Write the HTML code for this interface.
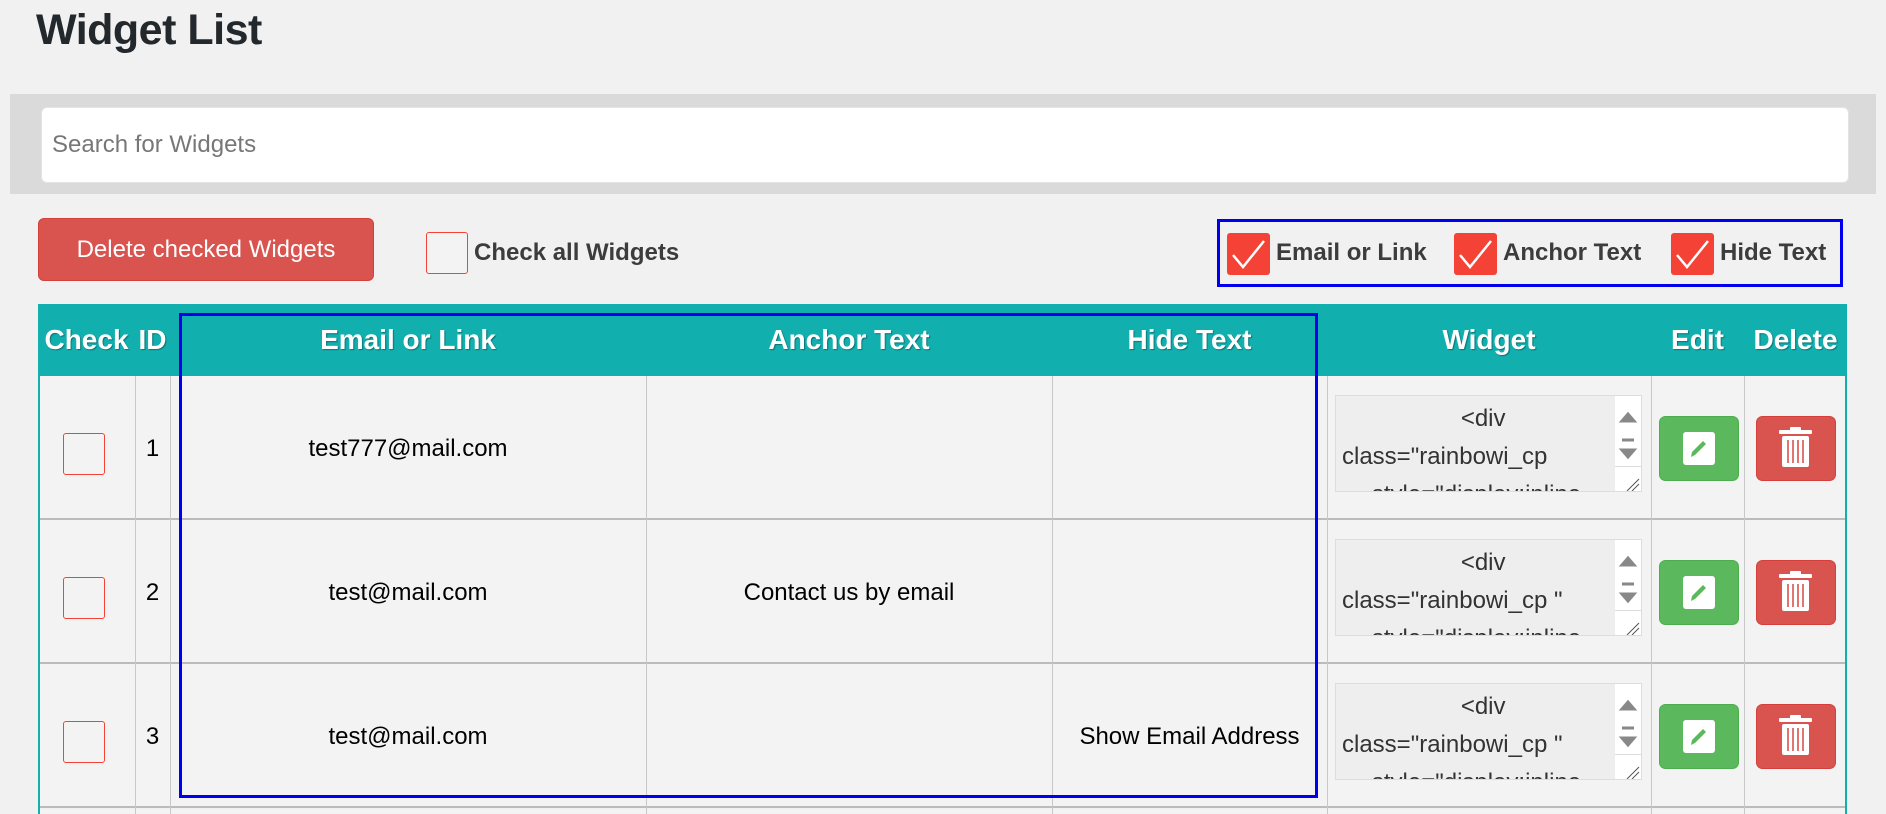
<!DOCTYPE html>
<html style="overflow:hidden;height:814px"><head><meta charset="utf-8"><style>
*{box-sizing:border-box;margin:0;padding:0}
body{width:1886px;height:814px;overflow:hidden;background:#f1f1f1;font-family:"Liberation Sans",sans-serif;position:relative;color:#000}
.a{position:absolute}
h1{position:absolute;left:36px;top:6px;font-size:43px;font-weight:bold;color:#23282d;letter-spacing:-0.5px}
.panel{left:10px;top:94px;width:1866px;height:100px;background:#dadada}
.inp{left:41px;top:107px;width:1808px;height:76px;background:#fff;border-radius:6px;border:1px solid #e4e4e4;font-size:24px;color:#777;padding:22px 10px;line-height:30px}
.btn{left:38px;top:218px;width:336px;height:63px;background:#d9534f;border:1px solid #d43f3a;border-radius:6px;color:#fff;font-size:24px;text-align:center;line-height:61px}
.cb{width:42px;height:42px;border:1px solid #f44336;border-radius:3px;background:#f3f3f3}
.lbl{font-size:24px;color:#3c3c3c;font-weight:bold;line-height:42px}
.blue{border:3px solid #0000ee}
.thead{left:38px;top:304px;width:1809px;height:72px;background:#12afaf}
.th{top:304px;height:72px;line-height:72px;color:#fff;font-size:28px;font-weight:bold;text-align:center;text-shadow:1px 1px 1px rgba(0,0,0,.35)}
.row{left:38px;width:1809px;height:144px;background:#f3f3f3;border-bottom:2px solid #bbb}
.vl{width:1px;background:#c8c8c8}
.td{font-size:24px;text-align:center;height:144px;line-height:146px}
.ta{width:307px;height:97px;background:#eee;border:1px solid #ddd;overflow:hidden;font-size:24px;color:#333;line-height:38px}
.ta .sb{position:absolute;right:0;top:0;width:26px;height:100%;background:#fff}
</style></head><body>
<h1>Widget List</h1>
<div class="a panel"></div>
<div class="a inp">Search for Widgets</div>
<div class="a btn">Delete checked Widgets</div>
<div class="a cb" style="left:426px;top:232px"></div>
<div class="a lbl" style="left:474px;top:232px">Check all Widgets</div>

<div class="a blue" style="left:1217px;top:219px;width:626px;height:68px"></div>
<svg class="a" style="left:1227px;top:233px" width="43" height="42"><rect width="43" height="42" rx="3" fill="#f44336"/><path d="M6 22 L16 34 L37 8" stroke="#fff" stroke-width="2.5" fill="none"/></svg>
<div class="a lbl" style="left:1276px;top:232px">Email or Link</div>
<svg class="a" style="left:1454px;top:233px" width="43" height="42"><rect width="43" height="42" rx="3" fill="#f44336"/><path d="M6 22 L16 34 L37 8" stroke="#fff" stroke-width="2.5" fill="none"/></svg>
<div class="a lbl" style="left:1503px;top:232px">Anchor Text</div>
<svg class="a" style="left:1671px;top:233px" width="43" height="42"><rect width="43" height="42" rx="3" fill="#f44336"/><path d="M6 22 L16 34 L37 8" stroke="#fff" stroke-width="2.5" fill="none"/></svg>
<div class="a lbl" style="left:1720px;top:232px">Hide Text</div>

<div class="a thead"></div>
<div class="a th" style="left:38px;width:97px">Check</div>
<div class="a th" style="left:135px;width:35px">ID</div>
<div class="a th" style="left:170px;width:476px">Email or Link</div>
<div class="a th" style="left:646px;width:406px">Anchor Text</div>
<div class="a th" style="left:1052px;width:275px">Hide Text</div>
<div class="a th" style="left:1327px;width:324px">Widget</div>
<div class="a th" style="left:1651px;width:93px">Edit</div>
<div class="a th" style="left:1744px;width:103px">Delete</div>

<div class="a row" style="top:376px"></div>
<div class="a row" style="top:520px"></div>
<div class="a row" style="top:664px"></div>
<div class="a" style="left:38px;top:809px;width:1809px;height:5px;background:#f3f3f3"></div>
<div class="a" style="left:38px;top:376px;width:2px;height:438px;background:#12afaf"></div>
<div class="a" style="left:1845px;top:376px;width:2px;height:438px;background:#12afaf"></div>
<div class="a vl" style="left:135px;top:376px;height:438px"></div>
<div class="a vl" style="left:170px;top:376px;height:438px"></div>
<div class="a vl" style="left:646px;top:376px;height:438px"></div>
<div class="a vl" style="left:1052px;top:376px;height:438px"></div>
<div class="a vl" style="left:1327px;top:376px;height:438px"></div>
<div class="a vl" style="left:1651px;top:376px;height:438px"></div>
<div class="a vl" style="left:1744px;top:376px;height:438px"></div>

<div class="a cb" style="left:63px;top:433px"></div>
<div class="a cb" style="left:63px;top:577px"></div>
<div class="a cb" style="left:63px;top:721px"></div>
<div class="a td" style="left:135px;top:376px;width:35px">1</div>
<div class="a td" style="left:135px;top:520px;width:35px">2</div>
<div class="a td" style="left:135px;top:664px;width:35px">3</div>
<div class="a td" style="left:170px;top:376px;width:476px">test777@mail.com</div>
<div class="a td" style="left:170px;top:520px;width:476px">test@mail.com</div>
<div class="a td" style="left:170px;top:664px;width:476px">test@mail.com</div>
<div class="a td" style="left:646px;top:520px;width:406px">Contact us by email</div>
<div class="a td" style="left:1052px;top:664px;width:275px;white-space:nowrap">Show Email Address</div>

<div class="a ta" style="left:1335px;top:395px"><div style="padding:4px 30px 0 6px;text-align:center">&nbsp;&nbsp;&lt;div<br><span style="display:block;text-align:left">class="rainbowi_cp</span>style="display:inline</div><div class="sb"><svg width="26" height="97"><path d="M7 25 L13 18 L19 25Z M7 44 L19 44 M7 54 L13 61 L19 54Z" fill="#888" stroke="#888" stroke-width="3"/><rect x="0" y="70" width="26" height="1" fill="#ddd"/><path d="M12 95 L24 83 M17 95 L24 88" stroke="#555" stroke-width="1"/></svg></div></div>
<div class="a ta" style="left:1335px;top:539px"><div style="padding:4px 30px 0 6px;text-align:center">&nbsp;&nbsp;&lt;div<br><span style="display:block;text-align:left">class="rainbowi_cp "</span>style="display:inline</div><div class="sb"><svg width="26" height="97"><path d="M7 25 L13 18 L19 25Z M7 44 L19 44 M7 54 L13 61 L19 54Z" fill="#888" stroke="#888" stroke-width="3"/><rect x="0" y="70" width="26" height="1" fill="#ddd"/><path d="M12 95 L24 83 M17 95 L24 88" stroke="#555" stroke-width="1"/></svg></div></div>
<div class="a ta" style="left:1335px;top:683px"><div style="padding:4px 30px 0 6px;text-align:center">&nbsp;&nbsp;&lt;div<br><span style="display:block;text-align:left">class="rainbowi_cp "</span>style="display:inline</div><div class="sb"><svg width="26" height="97"><path d="M7 25 L13 18 L19 25Z M7 44 L19 44 M7 54 L13 61 L19 54Z" fill="#888" stroke="#888" stroke-width="3"/><rect x="0" y="70" width="26" height="1" fill="#ddd"/><path d="M12 95 L24 83 M17 95 L24 88" stroke="#555" stroke-width="1"/></svg></div></div>

<svg class="a" style="left:1659px;top:416px" width="80" height="65"><rect x="0.5" y="0.5" width="79" height="64" rx="6" fill="#5cb85c" stroke="#4cae4c"/><rect x="24" y="16" width="32" height="33" rx="3" fill="#fff"/><path d="M32 41 L33 36 L44 25 L47 28 L36 39Z" fill="#5cb85c"/></svg>
<svg class="a" style="left:1659px;top:560px" width="80" height="65"><rect x="0.5" y="0.5" width="79" height="64" rx="6" fill="#5cb85c" stroke="#4cae4c"/><rect x="24" y="16" width="32" height="33" rx="3" fill="#fff"/><path d="M32 41 L33 36 L44 25 L47 28 L36 39Z" fill="#5cb85c"/></svg>
<svg class="a" style="left:1659px;top:704px" width="80" height="65"><rect x="0.5" y="0.5" width="79" height="64" rx="6" fill="#5cb85c" stroke="#4cae4c"/><rect x="24" y="16" width="32" height="33" rx="3" fill="#fff"/><path d="M32 41 L33 36 L44 25 L47 28 L36 39Z" fill="#5cb85c"/></svg>

<svg class="a" style="left:1756px;top:416px" width="80" height="65"><rect x="0.5" y="0.5" width="79" height="64" rx="6" fill="#d9534f" stroke="#d43f3a"/><rect x="23" y="14" width="33" height="4" rx="1" fill="#fff"/><rect x="34" y="11" width="11" height="4" rx="1" fill="#fff"/><rect x="26" y="20" width="27" height="31" rx="2" fill="#fff"/><path d="M32 24V47M37 24V47M42 24V47M47 24V47" stroke="#d9534f" stroke-width="1.6"/></svg>
<svg class="a" style="left:1756px;top:560px" width="80" height="65"><rect x="0.5" y="0.5" width="79" height="64" rx="6" fill="#d9534f" stroke="#d43f3a"/><rect x="23" y="14" width="33" height="4" rx="1" fill="#fff"/><rect x="34" y="11" width="11" height="4" rx="1" fill="#fff"/><rect x="26" y="20" width="27" height="31" rx="2" fill="#fff"/><path d="M32 24V47M37 24V47M42 24V47M47 24V47" stroke="#d9534f" stroke-width="1.6"/></svg>
<svg class="a" style="left:1756px;top:704px" width="80" height="65"><rect x="0.5" y="0.5" width="79" height="64" rx="6" fill="#d9534f" stroke="#d43f3a"/><rect x="23" y="14" width="33" height="4" rx="1" fill="#fff"/><rect x="34" y="11" width="11" height="4" rx="1" fill="#fff"/><rect x="26" y="20" width="27" height="31" rx="2" fill="#fff"/><path d="M32 24V47M37 24V47M42 24V47M47 24V47" stroke="#d9534f" stroke-width="1.6"/></svg>

<div class="a blue" style="left:179px;top:313px;width:1139px;height:485px"></div>
</body></html>
